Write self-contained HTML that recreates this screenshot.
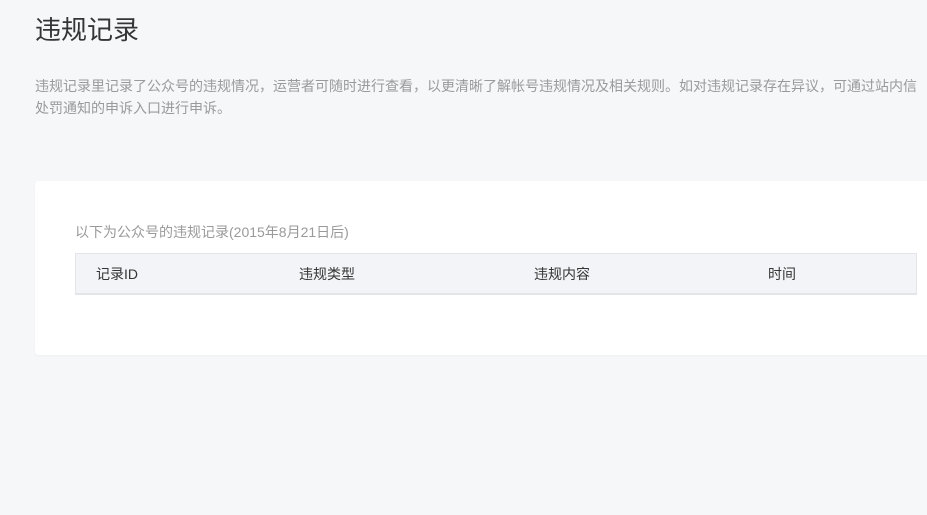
<!DOCTYPE html>
<html><head><meta charset="utf-8"><style>
body{margin:0;background:#f6f7f9;font-family:"Liberation Sans","Noto Sans CJK SC",sans-serif;width:927px;height:515px;overflow:hidden;position:relative}
h1{position:absolute;left:35px;top:12px;margin:0;font-size:26px;font-weight:normal;color:#353535;line-height:36px}
.desc{position:absolute;left:35px;top:75px;width:890px;font-size:14px;line-height:22px;color:#9a9a9a}
.card{position:absolute;left:35px;top:181px;width:900px;height:174px;background:#fff;border-radius:4px;box-shadow:0 1px 2px rgba(0,0,0,.03)}
.cap{position:absolute;left:40px;top:41px;font-size:14px;color:#9a9a9a;line-height:20px}
.th{position:absolute;left:40px;top:72px;width:840px;height:39px;background:#f3f4f7;border:1px solid #e4e5e9;border-bottom:2px solid #e4e5e9;font-size:14px;color:#353535}
.th span{position:absolute;top:10px;line-height:20px}
</style></head><body>
<h1>违规记录</h1>
<div class="desc">违规记录里记录了公众号的违规情况，运营者可随时进行查看，以更清晰了解帐号违规情况及相关规则。如对违规记录存在异议，可通过站内信处罚通知的申诉入口进行申诉。</div>
<div class="card">
<div class="cap">以下为公众号的违规记录(2015年8月21日后)</div>
<div class="th"><span style="left:20px">记录ID</span><span style="left:223px">违规类型</span><span style="left:458px">违规内容</span><span style="left:692px">时间</span></div>
</div>
</body></html>
